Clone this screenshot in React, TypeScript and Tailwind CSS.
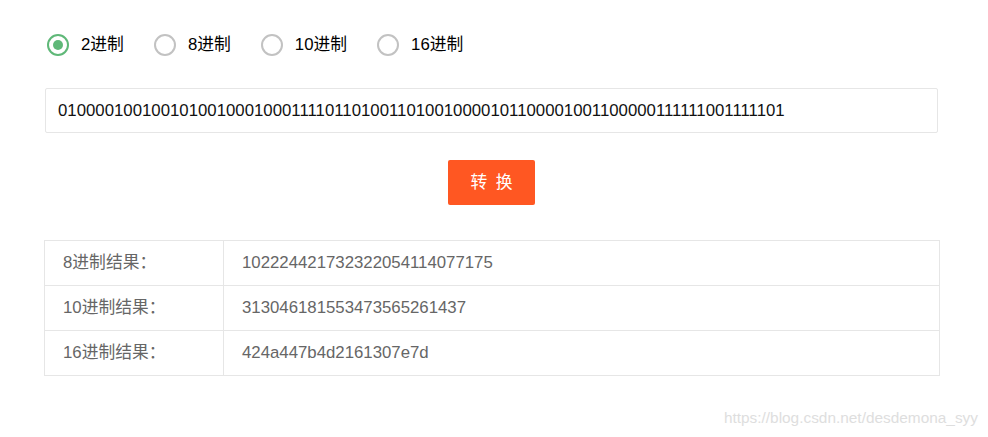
import { useState } from 'react'

const bases = [
  { label: '2进制', value: 2 },
  { label: '8进制', value: 8 },
  { label: '10进制', value: 10 },
  { label: '16进制', value: 16 },
]

const results = [
  { label: '8进制结果：', value: '102224421732322054114077175' },
  { label: '10进制结果：', value: '313046181553473565261437' },
  { label: '16进制结果：', value: '424a447b4d2161307e7d' },
]

export default function App() {
  const [base, setBase] = useState(2)
  const [input, setInput] = useState(
    '01000010010010100100010001111011010011010010000101100001001100000111111001111101'
  )

  return (
    <div
      className="relative min-h-[437px] w-[988px] bg-white text-[16.8px]"
      style={{ fontFamily: '"Liberation Sans", Arial, "Noto Sans CJK SC", sans-serif' }}
    >
      <div className="ml-[45px] w-[894px] pt-[34px]">
        {/* Base radios */}
        <div className="flex items-center h-[22px]">
          {bases.map((b) => {
            const checked = b.value === base
            return (
              <button
                key={b.value}
                type="button"
                onClick={() => setBase(b.value)}
                className="flex items-center mr-[28px] cursor-pointer"
              >
                <span
                  className={`flex items-center justify-center w-[22px] h-[22px] ml-[2px] rounded-full border-2 ${
                    checked ? 'border-[#5FB878]' : 'border-[#c2c2c2]'
                  }`}
                >
                  {checked && <span className="block w-[10px] h-[10px] rounded-full bg-[#5FB878]" />}
                </span>
                <span className="ml-[12px] leading-[22px] text-[#000]">{b.label}</span>
              </button>
            )
          })}
        </div>

        {/* Input */}
        <input
          value={input}
          onChange={(e) => setInput(e.target.value)}
          className="mt-[32px] block w-[893px] h-[45px] px-[12px] border border-[#e6e6e6] rounded-[2px] text-[16.8px] text-[#111] outline-none"
        />

        {/* Convert button */}
        <div className="flex justify-center mt-[27px] pr-[1px]">
          <button
            type="button"
            className="w-[87px] h-[45px] rounded-[2px] bg-[#FF5722] text-white text-[16.8px] tracking-[2px] pl-[2px]"
          >
            转 换
          </button>
        </div>

        {/* Results */}
        <table className="mt-[35px] -ml-[1px] w-[896px] border-collapse">
          <tbody>
            {results.map((r) => (
              <tr key={r.label} className="h-[45px]">
                <td className="w-[179px] border border-[#e6e6e6] pl-[18px] text-[#666]">{r.label}</td>
                <td className="border border-[#e6e6e6] pl-[18px] text-[#666]">{r.value}</td>
              </tr>
            ))}
          </tbody>
        </table>
      </div>

      {/* Watermark */}
      <div className="absolute right-[10px] top-[406px] text-[15.4px] text-[#dedede]">
        https://blog.csdn.net/desdemona_syy
      </div>
    </div>
  )
}
